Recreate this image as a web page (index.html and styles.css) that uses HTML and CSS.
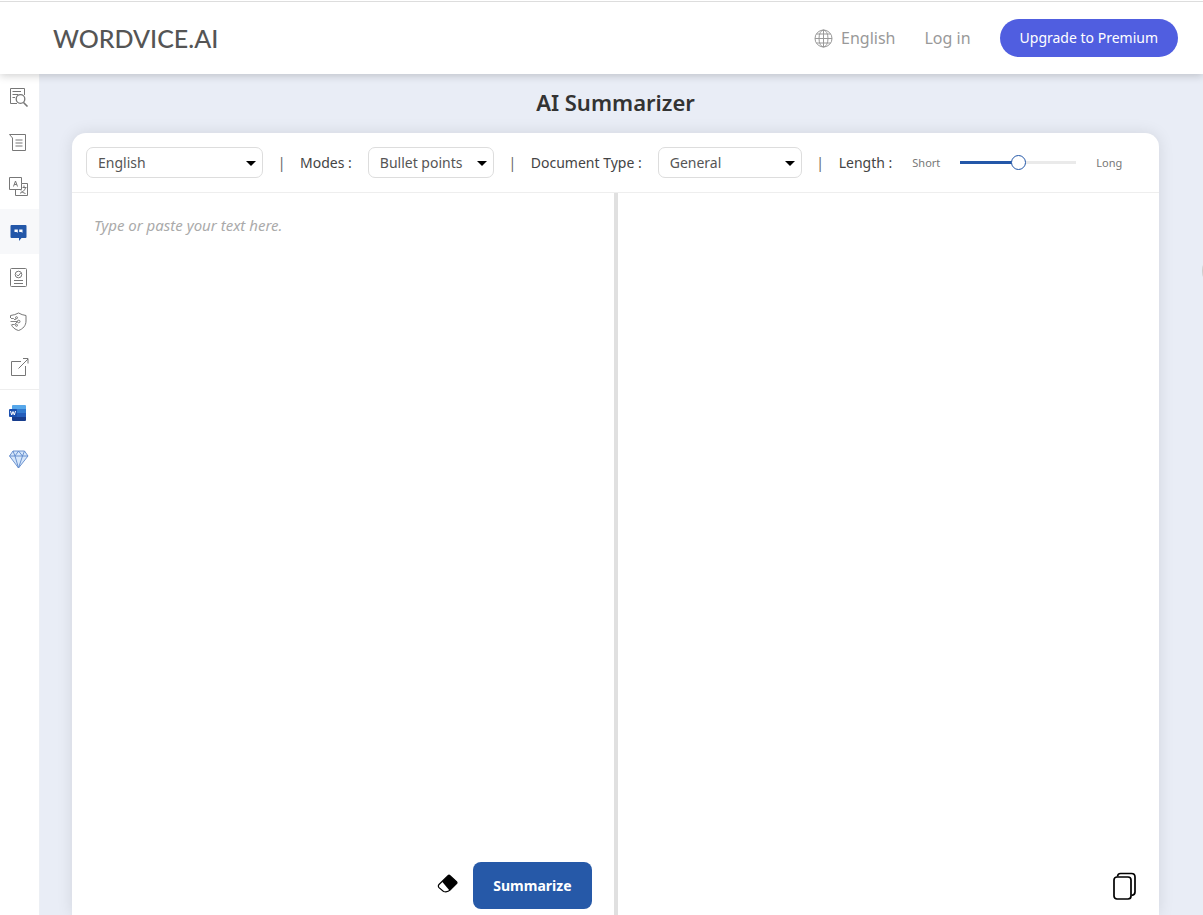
FILE: index.html
```html
<!DOCTYPE html>
<html lang="en">
<head>
<meta charset="utf-8">
<meta name="viewport" content="width=device-width, initial-scale=1">
<title>AI Summarizer</title>
<link rel="stylesheet" href="styles.css">
</head>
<body>
<header class="header">
  <a class="logo" href="#">WORDVICE.AI</a>
  <nav class="nav">
    <button class="nav-link" type="button">
      <svg width="19" height="19" viewBox="0 0 19 19" fill="none" stroke="currentColor" stroke-width="1"><circle cx="9.500" cy="9.500" r="8.500"/><ellipse cx="9.500" cy="9.500" rx="4.500" ry="8.500"/><path d="M9.500 1v17M1 9.500h17M2.500 5h14M2.500 14h14"/></svg>
      English</button>
    <a class="nav-link" href="#">Log in</a>
    <button class="premium" type="button">Upgrade to Premium</button>
  </nav>
</header>
<div class="layout">
  <aside class="sidebar">
    <a class="side-item" href="#" aria-label="Proofreader"><svg width="20" height="20" viewBox="0 0 20 20" fill="none" stroke="currentColor"><path d="M8 16.500H1.500V1.500h14V8M3.500 4.500H12M3.500 7.500H9M3.500 10.500H6"/><circle cx="11.500" cy="12" r="4.300" stroke-width="1.300"/><path d="M14.500 15.500l4 4" stroke-width="1.600"/></svg></a>
    <a class="side-item" href="#" aria-label="Paraphraser"><svg width="20" height="20" viewBox="0 0 20 20" fill="none" stroke="currentColor"><path d="M.500 2.500h16v16h-13V6zM6.500 8h7M6.500 11h7M6.500 14h7"/></svg></a>
    <a class="side-item" href="#" aria-label="Translator"><svg width="20" height="20" viewBox="0 0 20 20" fill="none" stroke="currentColor"><path d="M12.500 6.500V.500H.500v12h12v-6M12.500 6.500h6v12h-12v-6M4.500 9.500l2-5.500 2 5.500M5.200 7.500h2.600M13.500 10.500h4M15 8.500v2M16.500 11c-1 2.500-3 4.500-5.500 5.200M12 13.500c1 1.500 2.500 2.500 4.500 3"/></svg></a>
    <a class="side-item active" href="#" aria-label="Summarizer"><svg width="20" height="20" viewBox="0 0 20 20"><path fill="#2357a8" d="M2.500 3h14q1 0 1 1v11q0 1-1 1h-4L10 19v-3H2.500q-1 0-1-1V4q0-1 1-1z"/><path fill="#fff" d="M5.500 7.500h3.300v3.200l-1.300-.7h-2zM10.200 7.500h3.300v3.200l-1.300-.7h-2z"/></svg></a>
    <a class="side-item" href="#" aria-label="Plagiarism checker"><svg width="20" height="20" viewBox="0 0 20 20" fill="none" stroke="currentColor"><rect x="1.500" y="1.500" width="16" height="18" rx="1"/><circle cx="9.500" cy="7.500" r="3.300"/><path d="M7.700 7.500l1.500 1.500 2.500-3M5 13.500h9M5 16.500h9"/></svg></a>
    <a class="side-item" href="#" aria-label="AI detector"><svg width="20" height="20" viewBox="0 0 20 20" fill="none" stroke="currentColor"><path d="M1.500 6V3.500Q6 3 9.500 1 13 3 17 3.500V9c0 4.500-3 8-7.500 9.500C6 17.500 3.500 15.500 2.300 12.500"/><path stroke-width=".900" d="M1.500 9.500h7M2 6.500h2.500L6 8l1-1.500M3 12.500h2.500L8 10"/><circle cx="9.700" cy="9.500" r="1.300"/><circle cx="7.500" cy="5.700" r="1"/><circle cx="7.500" cy="13.300" r="1"/></svg></a>
    <a class="side-item last" href="#" aria-label="Open in new window"><svg width="20" height="20" viewBox="0 0 20 20" fill="none" stroke="currentColor"><path d="M12 4.500H2.500v14h14V9M9.500 11.500L19 2M14 1.500h5v5"/></svg></a>
    <a class="side-item" href="#" aria-label="Word add-in"><svg width="20" height="20" viewBox="0 0 20 20"><path fill="#56a7ea" d="M3 2.500Q3 2 4 2h12q1 0 1 1v3H3z"/><path fill="#327bd0" d="M3 6h14v4H3z"/><path fill="#255ebb" d="M3 10h14v4H3z"/><path fill="#173d8d" d="M3 14h14v3q0 1-1 1H4q-1 0-1-1z"/><rect y="6" width="8" height="8" rx="1" fill="#1b50af"/><path d="M1.500 8l1.200 4L4 8.500 5.300 12l1.200-4" fill="none" stroke="#fff"/></svg></a>
    <a class="side-item" href="#" aria-label="Premium"><svg width="20" height="20" viewBox="0 0 20 20" fill="#d5e6fa" stroke="#5f89cb" stroke-width=".900" stroke-linejoin="round"><path d="M4 2h11.500L19 7 9.500 19 .500 7z"/><path fill="none" d="M.500 7H19M4 2l2 5 3.500-5 4 5 2-5M6 7l3.500 12 4-12"/></svg></a>
  </aside>
  <main class="main">
    <h1 class="title">AI Summarizer</h1>
    <section class="card">
      <div class="toolbar">
        <span class="select language"><select aria-label="Language"><option>English</option></select></span>
        <span class="bar">|</span>
        <label class="label" for="modes">Modes :</label>
        <span class="select modes"><select id="modes"><option>Bullet points</option></select></span>
        <span class="bar">|</span>
        <label class="label" for="doctype">Document Type :</label>
        <span class="select doctype"><select id="doctype"><option>General</option></select></span>
        <span class="bar">|</span>
        <label class="label length-label" for="length">Length :</label>
        <span class="hint">Short</span>
        <input class="slider" id="length" type="range" min="0" max="2" value="1">
        <span class="hint">Long</span>
      </div>
      <div class="panes">
        <div class="pane">
          <textarea class="source" aria-label="Source text" placeholder="Type or paste your text here."></textarea>
          <div class="actions">
            <button class="icon-button" type="button" aria-label="Clear text"><svg width="22" height="24" viewBox="0 0 22 24"><path d="M11 1.700q1-.900 2 0l6.500 6q1 1 0 2L13 16.200q-2.300 2.300-6.500 1.300L2 13.700q-1.300-1.700 0-3.200z" fill="#fff" stroke="#000" stroke-width="1.200"/><path d="M5 7.500L11 1.700q1-.900 2 0l6.500 6q1 1 0 2L12.500 16.500z" fill="#000"/></svg></button>
            <button class="summarize" type="button">Summarize</button>
          </div>
        </div>
        <div class="divider"></div>
        <div class="pane result">
          <button class="icon-button" type="button" aria-label="Copy result"><svg width="24" height="28" viewBox="0 0 24 28" fill="none" stroke="#000" stroke-width="1.700"><rect x="2" y="5" width="17" height="22" rx="3"/><path d="M5.500 4.500Q5.700 1.500 8.500 1.500H19.500q3.500 0 3.500 3.500v15q0 3-3.500 3.500"/></svg></button>
        </div>
      </div>
    </section>
  </main>
</div>
<div class="floating"></div>
</body>
</html>
```
FILE: styles.css
```css
* { box-sizing: border-box; }
body {
  margin: 0;
  height: 100vh;
  display: flex;
  flex-direction: column;
  font: 14px/20px "Noto Sans", sans-serif;
  color: #444;
  background: #e9edf6;
}
button, select, textarea { font: inherit; color: inherit; }
button { border: 0; padding: 0; background: none; cursor: pointer; }
a { color: inherit; text-decoration: none; }
svg { display: block; flex: none; }

.header {
  position: relative;
  z-index: 1;
  flex: none;
  height: 74px;
  padding: 2px 25px 0 53px;
  display: flex;
  align-items: center;
  justify-content: space-between;
  background: linear-gradient(#fff 1px, #ddd 1px, #ddd 2px, #fff 2px);
  box-shadow: 0 2px 8px rgba(0, 0, 0, .18);
}
.logo { font: 500 25px/30px Lato, sans-serif; color: #555; }
.nav { display: flex; align-items: center; gap: 29px; }
.nav-link { display: flex; align-items: center; gap: 8px; font-size: 16px; color: #999; }
.premium {
  height: 38px;
  padding: 0 20px;
  border-radius: 19px;
  background: #505ee0;
  color: #fff;
}

.layout { flex: 1; min-height: 0; display: flex; }
.sidebar { width: 40px; flex: none; background: #fff; border-right: 1px solid #eceff4; }
.side-item {
  height: 45px;
  padding-left: 9px;
  display: flex;
  align-items: center;
  color: #777;
}
.side-item.active { background: #f7f8fa; }
.side-item.last { height: 46px; border-bottom: 1px solid #eee; }
.side-item.last ~ .side-item { height: 46px; }

.main { flex: 1; min-width: 0; padding: 14px 44px 0 32px; display: flex; flex-direction: column; }
.title { margin: 0 0 17px; font-size: 22px; line-height: 28px; font-weight: 600; color: #333; text-align: center; }
.card {
  flex: 1;
  display: flex;
  flex-direction: column;
  background: #fff;
  border-radius: 14px 14px 0 0;
  box-shadow: 0 0 16px rgba(0, 0, 0, .1);
}
.toolbar {
  height: 60px;
  padding: 0 14px;
  display: flex;
  align-items: center;
  border-bottom: 1px solid #eee;
}
.select { position: relative; flex: none; }
.select::after {
  content: "";
  position: absolute;
  right: 7px;
  top: 14px;
  border: 5px solid transparent;
  border-top-color: #000;
  border-bottom: 0;
  pointer-events: none;
}
.select select {
  appearance: none;
  width: 100%;
  height: 31px;
  padding: 0 11px;
  display: block;
  border: 1px solid #ddd;
  border-radius: 7px;
  background: #fff;
  color: #555;
}
.language { width: 177px; }
.modes { width: 126px; }
.doctype { width: 144px; }
.bar { width: 37px; text-align: center; color: #666; }
.label { margin-right: 16px; white-space: nowrap; }
.length-label { margin-right: 20px; }
.hint { font-size: 11px; color: #777; }
.slider {
  appearance: none;
  width: 116px;
  height: 16px;
  margin: 0 20px;
  background: linear-gradient(90deg, #2357a8 50%, #eaeaea 50%) center / 100% 3px no-repeat;
}
.slider::-webkit-slider-thumb {
  appearance: none;
  width: 15px;
  height: 15px;
  border: 1px solid #2357a8;
  border-radius: 50%;
  background: #fff;
}
.panes { flex: 1; display: grid; grid-template-columns: 1fr 4px 1fr; }
.pane { display: flex; flex-direction: column; }
.divider { background: #e0e0e0; }
.source {
  flex: 1;
  padding: 22px;
  border: 0;
  outline: 0;
  resize: none;
  background: none;
  font-size: 15px;
}
.source::placeholder { color: #aaa; font-style: italic; }
.actions { display: flex; align-items: center; justify-content: flex-end; gap: 14px; padding: 0 22px 6px; }
.summarize {
  height: 47px;
  padding: 0 20px;
  border-radius: 8px;
  background: #2659a8;
  color: #fff;
  font-weight: 700;
}
.result { align-items: flex-end; justify-content: flex-end; padding: 0 23px 15px; }
.floating {
  position: fixed;
  top: 251px;
  right: -39px;
  width: 40px;
  height: 40px;
  border-radius: 50%;
  background: #ccc;
}
```
